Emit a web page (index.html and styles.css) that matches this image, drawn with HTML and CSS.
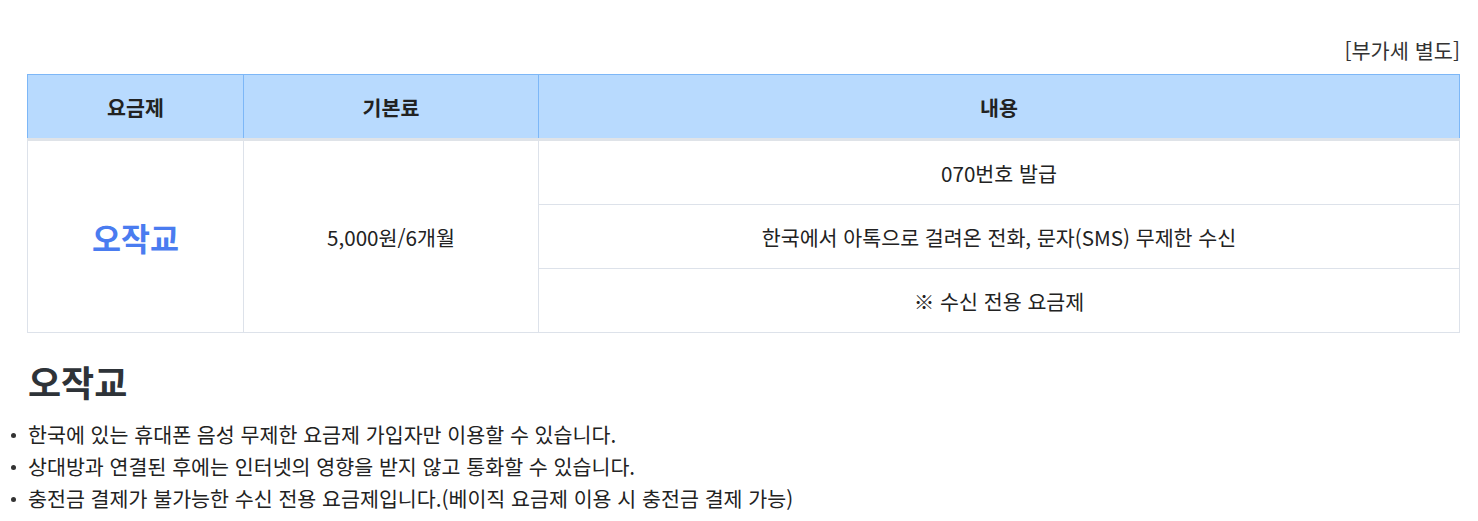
FILE: index.html
```html
<!DOCTYPE html>
<html lang="ko">
<head>
<meta charset="utf-8">
<link rel="stylesheet" href="styles.css">
</head>
<body>
<div class="page">
  <p class="vat">[부가세 별도]</p>
  <table class="plan">
    <colgroup>
      <col class="c1"><col class="c2"><col class="c3">
    </colgroup>
    <thead>
      <tr><th>요금제</th><th>기본료</th><th>내용</th></tr>
    </thead>
    <tbody>
      <tr>
        <td rowspan="3" class="name">오작교</td>
        <td rowspan="3">5,000원/6개월</td>
        <td>070번호 발급</td>
      </tr>
      <tr><td>한국에서 아톡으로 걸려온 전화, 문자(SMS) 무제한 수신</td></tr>
      <tr><td>※ 수신 전용 요금제</td></tr>
    </tbody>
  </table>
  <h2 class="title">오작교</h2>
  <ul class="notes">
    <li>한국에 있는 휴대폰 음성 무제한 요금제 가입자만 이용할 수 있습니다.</li>
    <li>상대방과 연결된 후에는 인터넷의 영향을 받지 않고 통화할 수 있습니다.</li>
    <li>충전금 결제가 불가능한 수신 전용 요금제입니다.(베이직 요금제 이용 시 충전금 결제 가능)</li>
  </ul>
</div>
</body>
</html>
```

FILE: styles.css
```css
html, body {
  margin: 0;
  padding: 0;
  background: #fff;
}
body {
  font-family: "Noto Sans CJK KR", "Noto Sans", sans-serif;
  color: #333;
}
.page {
  padding: 36px 18px 0 27px;
}
.vat {
  margin: 0 0 10px;
  text-align: right;
  font-size: 20.8px;
  line-height: 28px;
  color: #333;
}
.plan {
  width: 100%;
  border-collapse: collapse;
  table-layout: fixed;
}
.c1 { width: 216px; }
.c2 { width: 295px; }
.plan th {
  background: #b8dafe;
  border: 1px solid #7db7f7;
  border-bottom: 3px solid #dfe3e8;
  height: 63px;
  padding: 0;
  font-size: 20.6px;
  font-weight: 700;
  color: #222;
}
.plan td {
  border: 1px solid #dde2ea;
  height: 63px;
  padding: 0;
  text-align: center;
  font-size: 20.6px;
  color: #222;
}
.plan td.name {
  color: #4a7cf0;
  font-size: 31.5px;
  font-weight: 700;
}
.title {
  margin: 22px 0 0 1px;
  font-size: 36px;
  line-height: 52px;
  font-weight: 700;
  color: #2e3338;
}
.notes {
  margin: 11px 0 0 -27px;
  padding: 0;
  list-style: none;
}
.notes li {
  position: relative;
  padding-left: 28px;
  font-size: 20.6px;
  line-height: 32px;
  color: #222;
}
.notes li::before {
  content: "";
  position: absolute;
  left: 11px;
  top: 15px;
  width: 5px;
  height: 5px;
  border-radius: 50%;
  background: #333;
}
```
